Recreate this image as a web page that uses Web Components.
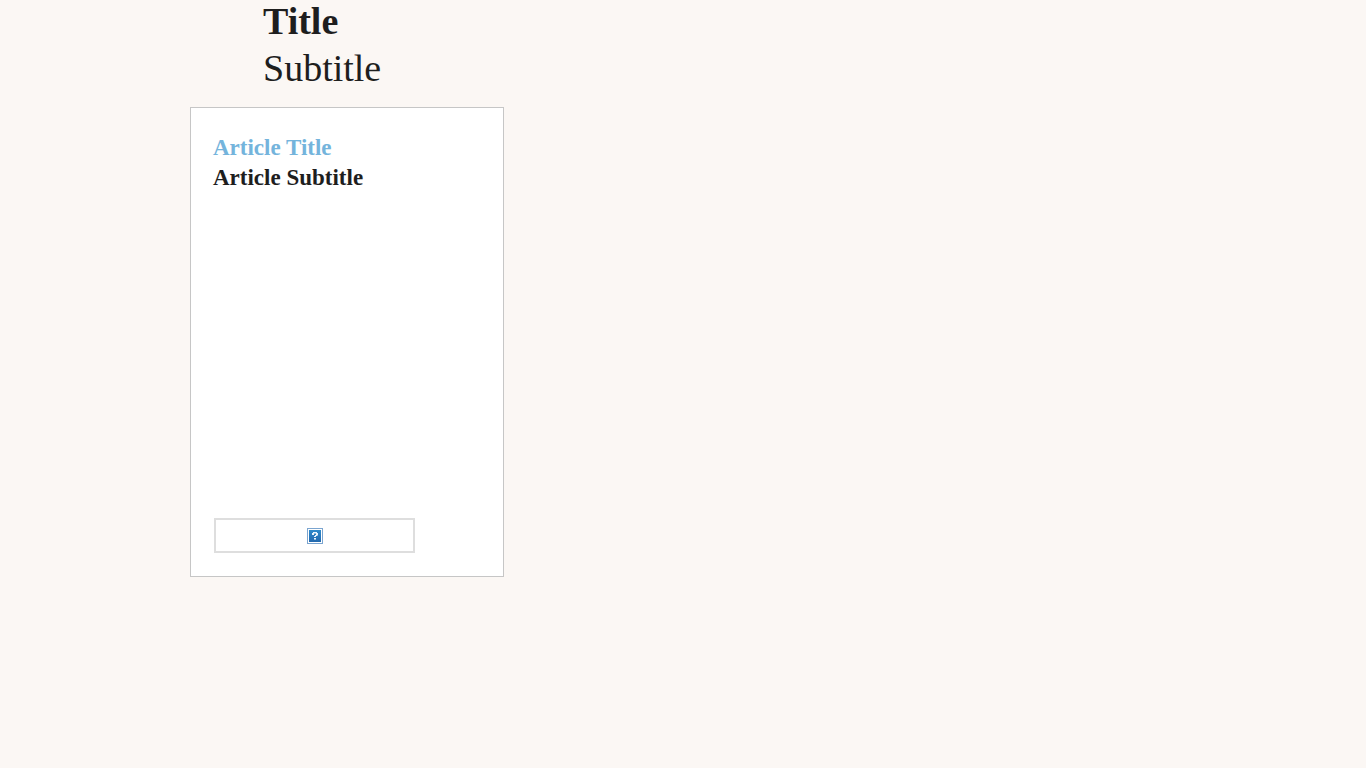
<!DOCTYPE html>
<html lang="en">
<head>
<meta charset="utf-8">
<meta name="viewport" content="width=device-width, initial-scale=1">
<title>Title</title>
<style>
  body {
    margin: 0;
    min-height: 100vh;
    background: #fbf7f4;
    color: #1e1e1e;
    font-family: "Liberation Serif", serif;
  }
</style>
</head>
<body>
<article-page>
  <page-heading slot="heading">
    <span slot="title">Title</span>
    <span slot="subtitle">Subtitle</span>
  </page-heading>
  <article-card>
    <span slot="title">Article Title</span>
    <span slot="subtitle">Article Subtitle</span>
    <missing-image slot="media"></missing-image>
  </article-card>
</article-page>

<script>
const define = (name, html) => {
  const template = document.createElement('template');
  template.innerHTML = html;
  customElements.define(name, class extends HTMLElement {
    constructor() {
      super();
      this.attachShadow({ mode: 'open' }).append(template.content.cloneNode(true));
    }
  });
};

define('article-page', `
  <style>
    :host { display: block; }
    main { display: flex; flex-direction: column; align-items: flex-start; padding-left: 190px; }
  </style>
  <main><slot name="heading"></slot><slot></slot></main>
`);

define('page-heading', `
  <style>
    :host { display: block; padding: 0 0 13px 73px; }
    h1, h2 { margin: 0; font-size: 38px; }
    h1 { font-weight: 700; line-height: 42px; }
    h2 { font-weight: 400; line-height: 52px; }
  </style>
  <header>
    <h1><slot name="title"></slot></h1>
    <h2><slot name="subtitle"></slot></h2>
  </header>
`);

define('article-card', `
  <style>
    :host { display: block; width: 23%; min-width: 314px; }
    article {
      box-sizing: border-box;
      display: flex;
      flex-direction: column;
      justify-content: space-between;
      min-height: 470px;
      padding: 25px 22px 23px;
      border: 1px solid #c6c6c6;
      background: #fff;
    }
    h3, h4 { margin: 0; font-size: 23px; font-weight: 700; line-height: 30px; }
    h3 { color: #74b4dc; }
    .media { padding-left: 1px; }
  </style>
  <article>
    <header>
      <h3><slot name="title"></slot></h3>
      <h4><slot name="subtitle"></slot></h4>
    </header>
    <div class="media"><slot name="media"></slot></div>
  </article>
`);

define('missing-image', `
  <style>
    :host {
      box-sizing: border-box;
      display: flex;
      align-items: center;
      justify-content: center;
      width: 201px;
      height: 35px;
      border: 2px solid #dedede;
    }
    svg { display: block; }
  </style>
  <svg width="16" height="16" viewBox="0 0 16 16" shape-rendering="crispEdges" role="img" aria-label="Missing image">
    <defs>
      <linearGradient id="blue" x1="0" y1="0" x2="0" y2="1">
        <stop offset="0" stop-color="#2d8acb"/>
        <stop offset="1" stop-color="#2469ae"/>
      </linearGradient>
    </defs>
    <rect width="16" height="16" fill="#7ba5d0"/>
    <rect x="1" y="1" width="14" height="14" fill="#fff"/>
    <rect x="2" y="2" width="12" height="12" fill="url(#blue)"/>
    <path d="M6 4h4v1H6zM5 5h2v2H5zM9 5h2v2H9zM8 7h2v1H8zM7 8h2v1H7zM7 10h2v1H7z" fill="#e8f3fb"/>
    <path d="M7 5h2v1H7zM10 7h1v1h-1zM7 11h2v1H7z" fill="#8cbce0"/>
  </svg>
`);
</script>
</body>
</html>
